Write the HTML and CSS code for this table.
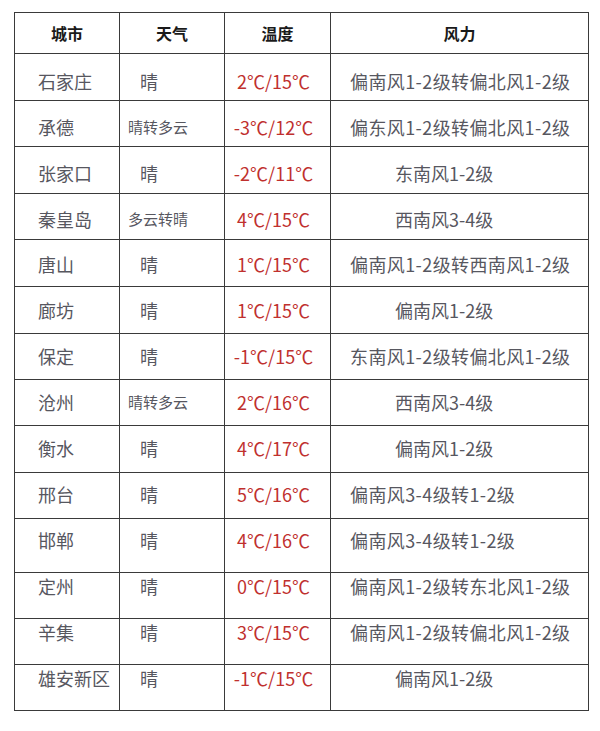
FILE: index.html
```html
<!DOCTYPE html>
<html lang="zh-CN">
<head>
<meta charset="utf-8">
<title>河北天气</title>
<link rel="stylesheet" href="styles.css">
</head>
<body>
<table class="weather">
  <colgroup>
    <col class="c-city"><col class="c-wx"><col class="c-temp"><col class="c-wind">
  </colgroup>
  <thead>
    <tr><th>城市</th><th>天气</th><th>温度</th><th>风力</th></tr>
  </thead>
  <tbody>
    <tr><td class="city">石家庄</td><td class="wx">晴</td><td class="temp">2℃/15℃</td><td class="wind">偏南风1-2级转偏北风1-2级</td></tr>
    <tr><td class="city">承德</td><td class="wx small">晴转多云</td><td class="temp">-3℃/12℃</td><td class="wind">偏东风1-2级转偏北风1-2级</td></tr>
    <tr><td class="city">张家口</td><td class="wx">晴</td><td class="temp">-2℃/11℃</td><td class="wind short">东南风1-2级</td></tr>
    <tr><td class="city">秦皇岛</td><td class="wx small">多云转晴</td><td class="temp">4℃/15℃</td><td class="wind short">西南风3-4级</td></tr>
    <tr><td class="city">唐山</td><td class="wx">晴</td><td class="temp">1℃/15℃</td><td class="wind">偏南风1-2级转西南风1-2级</td></tr>
    <tr><td class="city">廊坊</td><td class="wx">晴</td><td class="temp">1℃/15℃</td><td class="wind short">偏南风1-2级</td></tr>
    <tr><td class="city">保定</td><td class="wx">晴</td><td class="temp">-1℃/15℃</td><td class="wind">东南风1-2级转偏北风1-2级</td></tr>
    <tr><td class="city">沧州</td><td class="wx small">晴转多云</td><td class="temp">2℃/16℃</td><td class="wind short">西南风3-4级</td></tr>
    <tr><td class="city">衡水</td><td class="wx">晴</td><td class="temp">4℃/17℃</td><td class="wind short">偏南风1-2级</td></tr>
    <tr><td class="city">邢台</td><td class="wx">晴</td><td class="temp">5℃/16℃</td><td class="wind">偏南风3-4级转1-2级</td></tr>
    <tr><td class="city">邯郸</td><td class="wx">晴</td><td class="temp">4℃/16℃</td><td class="wind">偏南风3-4级转1-2级</td></tr>
    <tr><td class="city">定州</td><td class="wx">晴</td><td class="temp">0℃/15℃</td><td class="wind">偏南风1-2级转东北风1-2级</td></tr>
    <tr><td class="city">辛集</td><td class="wx">晴</td><td class="temp">3℃/15℃</td><td class="wind">偏南风1-2级转偏北风1-2级</td></tr>
    <tr><td class="city">雄安新区</td><td class="wx">晴</td><td class="temp">-1℃/15℃</td><td class="wind short">偏南风1-2级</td></tr>
  </tbody>
</table>
</body>
</html>
```

FILE: styles.css
```css
html, body {
  margin: 0;
  padding: 0;
  background: #ffffff;
}

body {
  padding: 12px 0 0 14px;
  font-family: "Noto Sans CJK SC", "Noto Sans", sans-serif;
  color: #57575f;
}

.weather {
  border-collapse: collapse;
  table-layout: fixed;
  width: 574px;
}

.c-city { width: 105px; }
.c-wx { width: 105px; }
.c-temp { width: 106px; }
.c-wind { width: 258px; }

.weather th,
.weather td {
  border: 1px solid #3a3a3a;
  padding: 0;
}

.weather thead tr { height: 41px; }

.weather th {
  font-size: 16px;
  font-weight: 700;
  color: #1a1a1a;
  text-align: center;
  vertical-align: middle;
  line-height: 22px;
}

.weather td {
  vertical-align: top;
  font-size: 18px;
  line-height: 26px;
  white-space: nowrap;
}

.weather tbody tr { height: 46px; }
.weather tbody tr:nth-child(1),
.weather tbody tr:nth-child(3),
.weather tbody tr:nth-child(5),
.weather tbody tr:nth-child(6),
.weather tbody tr:nth-child(9) { height: 47px; }
.weather tbody tr:nth-child(11) { height: 54px; }

/* text sits on an even 46px rhythm, independent of the ruled lines */
.weather tbody tr:nth-child(1) td { padding-top: 14px; }
.weather tbody tr:nth-child(2) td,
.weather tbody tr:nth-child(3) td { padding-top: 13px; }
.weather tbody tr:nth-child(4) td { padding-top: 12px; }
.weather tbody tr:nth-child(5) td { padding-top: 11px; }
.weather tbody tr:nth-child(6) td { padding-top: 10px; }
.weather tbody tr:nth-child(7) td,
.weather tbody tr:nth-child(8) td,
.weather tbody tr:nth-child(9) td { padding-top: 9px; }
.weather tbody tr:nth-child(10) td,
.weather tbody tr:nth-child(11) td { padding-top: 8px; }
.weather tbody tr:nth-child(12) td,
.weather tbody tr:nth-child(13) td,
.weather tbody tr:nth-child(14) td { padding-top: 0; }

.weather td.city { padding-left: 23px; }
.weather td.wx { padding-left: 20px; }
.weather td.wx.small { padding-left: 8px; font-size: 15px; }
.weather td.temp {
  color: #c0302e;
  text-align: center;
  padding-right: 8px;
}
.weather td.wind {
  padding-left: 19px;
  letter-spacing: 0.4px;
}
.weather td.wind.short {
  padding-left: 64px;
  letter-spacing: 0;
}
```
